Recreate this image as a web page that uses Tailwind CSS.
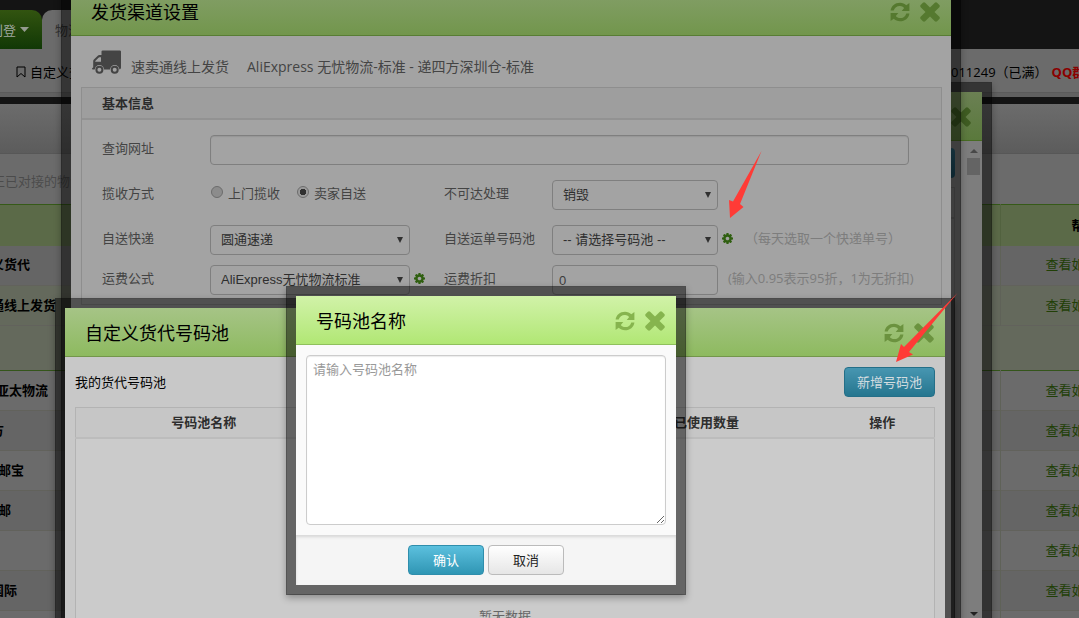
<!DOCTYPE html>
<html lang="zh-CN">
<head>
<meta charset="utf-8">
<title>发货渠道设置</title>
<script src="https://cdn.jsdelivr.net/npm/@tailwindcss/browser@4"></script>
</head>
<body class="relative h-screen overflow-hidden bg-[#6b6b6b] font-['Open_Sans','Noto_Sans_CJK_SC',sans-serif] text-[13px] leading-5 text-black">

<svg class="hidden" aria-hidden="true">
  <symbol id="times" viewBox="290 290 1212 1212"><path d="M1490 1322q0 40-28 68l-136 136q-28 28-68 28t-68-28l-294-294-294 294q-28 28-68 28t-68-28l-136-136q-28-28-28-68t28-68l294-294-294-294q-28-28-28-68t28-68l136-136q28-28 68-28t68 28l294 294 294-294q28-28 68-28t68 28l136 136q28 28 28 68t-28 68l-294 294 294 294q28 28 28 68z" transform="translate(0 -64)"/></symbol>
  <symbol id="refresh" viewBox="0 0 20 20"><path d="M.6 8.600C1.200 4 5 .8 10 .8c2.600 0 4.700.9 6.300 2.400L19.400 1v7.900h-7.700l2.500-2.800C13 4.700 11.700 3.900 10 3.900c-3.200 0-5.500 1.700-6.300 4.700zM19.400 11.400C18.800 16 15 19.200 10 19.200c-2.600 0-4.700-.9-6.300-2.400L.6 19v-7.900h7.700l-2.500 2.800c1.200 1.400 2.500 2.200 4.200 2.200 3.200 0 5.500-1.700 6.300-4.700z"/></symbol>
  <symbol id="cog" viewBox="128 128 1536 1536"><path d="M1152 896q0-106-75-181t-181-75-181 75-75 181 75 181 181 75 181-75 75-181zm512-109v222q0 12-8 23t-20 13l-185 28q-19 54-39 91 35 50 107 138 10 12 10 25t-9 23q-27 37-99 108t-94 71q-12 0-26-9l-138-108q-44 23-91 38-16 136-29 186-7 28-36 28h-222q-14 0-24.500-8.500t-11.500-21.500l-28-184q-49-16-90-37l-141 107q-10 9-25 9-14 0-25-11-126-114-165-168-7-10-7-23 0-12 8-23 15-21 51-66.500t54-70.500q-27-50-41-99l-183-27q-13-2-21-12.500t-8-23.500v-222q0-12 8-23t19-13l186-28q14-46 39-92-40-57-107-138-10-12-10-24 0-10 9-23 26-36 98.500-107.500t94.500-71.500q13 0 26 10l138 107q44-23 91-38 16-136 29-186 7-28 36-28h222q14 0 24.500 8.500t11.500 21.500l28 184q49 16 90 37l142-107q9-9 24-9 13 0 25 10 129 119 165 170 7 8 7 22 0 12-8 23-15 21-51 66.500t-54 70.500q26 50 41 98l183 28q13 2 21 12.500t8 23.500z"/></symbol>
  <symbol id="down" viewBox="0 0 6 6"><path d="M0 0h6L3 6z"/></symbol>
</svg>

<!-- Page behind the dialogs -->
<div class="flex h-full flex-col overflow-hidden">
  <nav class="flex h-[49px] shrink-0 items-end bg-[#141414]">
    <a href="#" class="flex h-[39px] w-[42px] items-center justify-end gap-1 overflow-hidden rounded-tr-[10px] bg-linear-to-b from-[#325410] to-[#103806] pr-[13px] whitespace-nowrap text-[#a0a8a0]"><span>刊登</span><svg class="h-[5px] w-[9px] shrink-0 fill-[#959b90]" viewBox="0 0 9 5"><path d="M0 0h9L4.500 5z"/></svg></a>
    <a href="#" class="flex h-[39px] w-[90px] items-center rounded-t-[10px] bg-[#6b6b6b] pl-[13px] text-[#303030]">物流</a>
  </nav>
  <div class="flex h-11 shrink-0 items-center border-b border-[#5b5b5b] bg-[#6b6b6b] pt-[2px]">
    <a href="#" class="flex flex-1 items-center gap-1 pl-4"><svg class="h-3 w-[10px] fill-none stroke-black" viewBox="0 0 10 12"><path d="M1 1h8v10L5 7.500 1 11z"/></svg>自定义查询</a>
    <div class="w-32 overflow-hidden whitespace-nowrap">011249（已满）<b class="ml-1 text-[#8a0000]">QQ群</b></div>
  </div>
  <div class="h-1 shrink-0 bg-[#616161]"></div>
  <div class="h-[7px] shrink-0 bg-[#141414]"></div>
  <div class="h-[50px] shrink-0 border-b border-[#575757] bg-linear-to-b from-[#6c6c6c] to-[#5c5c5c]"></div>
  <div class="flex h-[50px] shrink-0 items-center pt-1 text-[#4b4b4b]"><span class="flex w-[83px] justify-end overflow-hidden whitespace-nowrap">正已对接的物流</span></div>
  <table class="w-full shrink-0 table-fixed border-collapse">
    <colgroup><col><col class="w-[79px]"></colgroup>
    <thead><tr class="h-[41px] border-t border-[#365a18] bg-[#5b6a48]"><th></th><th class="overflow-hidden border-l border-[#52623f] pl-[71px] text-left font-bold whitespace-nowrap">帮助</th></tr></thead>
    <tbody class="[&_a]:text-[#213f06] [&_td]:overflow-hidden [&_td]:pb-[2px] [&_td]:whitespace-nowrap [&_td+td]:border-l [&_td+td]:border-[#5f6258] [&_td+td]:pl-[45px] [&_tr]:h-10 [&_tr]:border-b [&_tr]:border-[#62625c] [&_b]:flex [&_b]:justify-end">
      <tr class="bg-[#656565]"><td><b class="w-[30px]">义货代</b></td><td><a href="#">查看如何</a></td></tr>
      <tr class="bg-[#64695c]"><td><b class="w-14">速卖通线上发货</b></td><td><a href="#">查看如何</a></td></tr>
      <tr class="border-[#34551a]! bg-[#64695c]"><td colspan="2" class="h-[45px]"></td></tr>
      <tr><td><b class="w-12">亚太物流</b></td><td><a href="#">查看如何</a></td></tr>
      <tr class="bg-[#656565]"><td><b class="w-1">方</b></td><td><a href="#">查看如何</a></td></tr>
      <tr><td><b class="w-6">邮宝</b></td><td><a href="#">查看如何</a></td></tr>
      <tr class="bg-[#656565]"><td><b class="w-[11px]">邮</b></td><td><a href="#">查看如何</a></td></tr>
      <tr><td></td><td><a href="#">查看如何</a></td></tr>
      <tr class="bg-[#656565]"><td><b class="w-[17px]">国际</b></td><td><a href="#">查看如何</a></td></tr>
      <tr><td></td><td></td></tr>
    </tbody>
  </table>
</div>

<!-- Dialog: channel list -->
<section class="absolute top-[82px] left-[92px] flex h-[640px] w-[900px] flex-col border-10 border-black/50 bg-[#7e7e7e] bg-clip-padding shadow-[0_3px_7px_rgba(0,0,0,0.3)]">
  <header class="flex h-[49px] shrink-0 items-center justify-end border-b border-[#486c23] bg-linear-to-b from-[#6b8053] to-[#5a793c] pt-[2px] pr-[11px]">
    <button aria-label="关闭"><svg class="size-5 fill-[#3f5c22]"><use href="#times"/></svg></button>
  </header>
  <div class="flex flex-1">
    <div class="flex-1 pt-[7px] pr-[10px]">
      <button class="ml-auto block h-[30px] w-24 rounded-[4px] bg-linear-to-b from-[#2b6074] to-[#1a4c5f]" aria-label="添加"></button>
      <div class="mt-[9px] h-8 border border-b-2 border-[#6f6f6f]"></div>
      <div class="h-[500px] border-r border-[#6f6f6f]"></div>
    </div>
    <div class="flex w-[17px] flex-col items-center bg-[#7d7d7d] pt-2">
      <svg class="h-1 w-2 fill-[#484848]" viewBox="0 0 8 4"><path d="M0 4h8L4 0z"/></svg>
      <div class="mt-[5px] h-[17px] w-[13px] bg-[#646464]"></div>
      <svg class="mt-[437px] h-1 w-2 fill-[#222]" viewBox="0 0 8 4"><path d="M0 0h8L4 4z"/></svg>
    </div>
  </div>
</section>

<!-- Dialog: shipping channel settings -->
<section class="absolute -top-[23px] left-[61px] h-[760px] w-[900px] border-10 border-black/50 bg-[#a3a3a3] bg-clip-padding shadow-[0_3px_7px_rgba(0,0,0,0.3)]">
  <header class="flex h-[49px] items-center border-b border-[#587d34] bg-linear-to-b from-[#859f6a] to-[#72964c] pt-[2px] pr-[11px] pl-5">
    <h2 class="flex-1 text-lg">发货渠道设置</h2>
    <button aria-label="刷新"><svg class="mr-[10px] size-5 fill-[#55792f]"><use href="#refresh"/></svg></button>
    <button aria-label="关闭"><svg class="size-5 fill-[#55792f]"><use href="#times"/></svg></button>
  </header>
  <div class="pr-[9px] pl-[10px] text-[#444]">
    <div class="flex h-[51px] items-center pt-[10px] pl-[11px] text-sm">
      <svg class="mr-[10px] mb-[9px] h-6 w-[29px] fill-[#444]" viewBox="0 0 29 24"><path fill-rule="evenodd" d="M9.500 1.600Q9.500.4 10.700.4h17Q29 .4 29 1.600v16.200q0 1.700-2 1.700H.9Q0 19.500 0 18.800t1.200-1.200V11q0-.9.7-1.600l3.600-3.500Q6.300 5 7.500 5h2zM3.200 11.800H9V7.300H7.400q-.5 0-.9.4l-3 3q-.3.3-.3 1.100z"/><circle cx="7.400" cy="19.700" r="4.700" fill="#a3a3a3"/><circle cx="22.700" cy="19.700" r="4.700" fill="#a3a3a3"/><circle cx="7.400" cy="19.700" r="3" fill="none" stroke="#444" stroke-width="2"/><circle cx="22.700" cy="19.700" r="3" fill="none" stroke="#444" stroke-width="2"/></svg>
      <span>速卖通线上发货</span><span class="ml-[18px]">AliExpress 无忧物流-标准 - 递四方深圳仓-标准</span>
    </div>
    <div class="border border-[#8e8e8e]">
      <h3 class="h-8 border-b-2 border-[#929292] bg-[#9e9e9e] pl-5 leading-[30px] font-bold text-[#2b2b2b]">基本信息</h3>
      <form class="flex flex-col pt-[15px] pr-8 pb-[9px] pl-5 leading-[26px]">
        <div class="flex h-[45px] items-start"><label for="url" class="w-[108px]">查询网址</label>
          <input id="url" class="h-[30px] flex-1 rounded-[4px] border border-[#7f7f7f] shadow-[inset_0_1px_1px_rgba(0,0,0,0.08)]"></div>
        <div class="grid h-[45px] grid-cols-[108px_234px_108px_1fr] items-start">
          <span>揽收方式</span>
          <div class="flex pl-px">
            <label class="flex items-center gap-[5px]"><input type="radio" name="m" class="mb-[2px] size-3 appearance-none rounded-full border border-[#6c6c6c] bg-[#8c8c8c]">上门揽收</label>
            <label class="ml-[17px] flex items-center gap-[5px]"><input type="radio" name="m" checked class="mb-[2px] size-3 appearance-none rounded-full border border-[#6c6c6c] bg-[radial-gradient(circle,#303030_0_3px,#9a9a9a_3px)]">卖家自送</label>
          </div>
          <label for="undel">不可达处理</label>
          <div class="relative w-[166px]"><select id="undel" class="h-[30px] w-full appearance-none rounded-[4px] border border-[#7f7f7f] bg-transparent pl-[10px] font-['Liberation_Sans','Noto_Sans_CJK_SC',sans-serif] text-[#2e2e2e]"><option>销毁</option></select><svg class="pointer-events-none absolute top-3 right-[7px] size-[6px] fill-[#303030]"><use href="#down"/></svg></div>
        </div>
        <div class="grid h-10 grid-cols-[108px_234px_108px_1fr] items-start">
          <label for="exp">自送快递</label>
          <div class="relative w-[200px]"><select id="exp" class="h-[30px] w-full appearance-none rounded-[4px] border border-[#7f7f7f] bg-transparent pl-[10px] font-['Liberation_Sans','Noto_Sans_CJK_SC',sans-serif] text-[#2e2e2e]"><option>圆通速递</option></select><svg class="pointer-events-none absolute top-3 right-[7px] size-[6px] fill-[#303030]"><use href="#down"/></svg></div>
          <label for="pool">自送运单号码池</label>
          <div class="flex">
            <div class="relative w-[166px]"><select id="pool" class="h-[30px] w-full appearance-none rounded-[4px] border border-[#7f7f7f] bg-transparent pl-[10px] font-['Liberation_Sans','Noto_Sans_CJK_SC',sans-serif] text-[#2e2e2e]"><option>-- 请选择号码池 --</option></select><svg class="pointer-events-none absolute top-3 right-[7px] size-[6px] fill-[#303030]"><use href="#down"/></svg></div>
            <button type="button" aria-label="设置号码池" class="ml-1 h-[27px]"><svg class="size-[11px] fill-[#2f5f10]"><use href="#cog"/></svg></button>
            <span class="ml-[12px] whitespace-nowrap text-[#7d7d7d]">（每天选取一个快递单号）</span>
          </div>
        </div>
        <div class="grid h-[30px] grid-cols-[108px_234px_108px_1fr] items-start">
          <label for="fee">运费公式</label>
          <div class="flex">
            <div class="relative w-[200px]"><select id="fee" class="h-[30px] w-full appearance-none rounded-[4px] border border-[#7f7f7f] bg-transparent pl-[10px] font-['Liberation_Sans','Noto_Sans_CJK_SC',sans-serif] text-[#2e2e2e]"><option>AliExpress无忧物流标准</option></select><svg class="pointer-events-none absolute top-3 right-[7px] size-[6px] fill-[#303030]"><use href="#down"/></svg></div>
            <button type="button" aria-label="设置公式" class="ml-1 h-[27px]"><svg class="size-[11px] fill-[#2f5f10]"><use href="#cog"/></svg></button>
          </div>
          <label for="disc">运费折扣</label>
          <div class="flex">
            <input id="disc" value="0" class="h-[30px] w-[166px] rounded-[4px] border border-[#7f7f7f] px-[6px] font-['Liberation_Sans',sans-serif] text-[#3c3c3c]">
            <span class="ml-[10px] whitespace-nowrap text-[#7d7d7d]">(输入0.95表示95折，1为无折扣)</span>
          </div>
        </div>
      </form>
    </div>
  </div>
</section>

<!-- Dialog: custom number pools -->
<section class="absolute top-[298px] left-[55px] h-[420px] w-[900px] border-10 border-black/50 bg-[#c8c8c8] bg-clip-padding shadow-[0_3px_7px_rgba(0,0,0,0.3)]">
  <header class="flex h-[49px] items-center border-b border-[#73964b] bg-linear-to-b from-[#a6c486] to-[#8eba5f] pt-[2px] pr-[11px] pl-5">
    <h2 class="flex-1 text-lg">自定义货代号码池</h2>
    <button aria-label="刷新"><svg class="mr-[10px] size-5 fill-[#6b923f]"><use href="#refresh"/></svg></button>
    <button aria-label="关闭"><svg class="size-5 fill-[#6b923f]"><use href="#times"/></svg></button>
  </header>
  <div class="p-[10px]">
    <div class="flex items-center justify-between">
      <span>我的货代号码池</span>
      <button class="h-[30px] rounded-[4px] border border-[#246f88] bg-linear-to-b from-[#4796b1] to-[#25768f] px-[12px] text-[#d4dde0]">新增号码池</button>
    </div>
    <table class="mt-[10px] w-full table-fixed border-collapse border border-[#b3b3b3] bg-[#cbcbcb]">
      <colgroup><col class="w-[256px]"><col><col class="w-[248px]"><col class="w-[104px]"></colgroup>
      <thead><tr class="h-[30px] border-b-2 border-[#bcbcbc] bg-[#c6c6c6] text-[#2e2e2e]"><th>号码池名称</th><th></th><th>已使用数量</th><th>操作</th></tr></thead>
      <tbody><tr><td colspan="4" class="h-[240px] pt-[116px] text-center text-[#666]">暂无数据</td></tr></tbody>
    </table>
  </div>
</section>

<!-- Dialog: pool name -->
<section class="absolute top-[286px] left-[286px] w-[400px] border-10 border-black/50 bg-[#fafafa] bg-clip-padding shadow-[0_3px_7px_rgba(0,0,0,0.3)]">
  <header class="flex h-[49px] items-center border-b border-[#8fc05c] bg-linear-to-b from-[#d1f2a8] to-[#b1e774] pt-[2px] pr-[11px] pl-5">
    <h2 class="flex-1 text-lg"><label for="name">号码池名称</label></h2>
    <button aria-label="刷新"><svg class="mr-[10px] size-5 fill-[#86b44e]"><use href="#refresh"/></svg></button>
    <button aria-label="关闭"><svg class="size-5 fill-[#86b44e]"><use href="#times"/></svg></button>
  </header>
  <div class="p-[10px]">
    <textarea id="name" placeholder="请输入号码池名称" class="block h-[170px] w-full rounded-[4px] border border-[#ccc] bg-white px-[6px] py-[3px] shadow-[inset_0_1px_1px_rgba(0,0,0,0.08)] placeholder:text-[#999]"></textarea>
  </div>
  <footer class="flex h-[50px] items-center justify-center gap-1 bg-[#f5f5f5] shadow-[inset_0_2px_3px_rgba(0,0,0,0.12)]">
    <button class="h-[30px] w-[76px] rounded-[4px] border border-[#2f8eac] bg-linear-to-b from-[#5bc0de] to-[#2f96b4] text-white">确认</button>
    <button class="h-[30px] w-[76px] rounded-[4px] border border-[#bbb] bg-linear-to-b from-white to-[#e6e6e6] text-[#222]">取消</button>
  </footer>
</section>

<!-- Annotation arrows -->
<svg class="pointer-events-none absolute top-[151px] left-[728px] h-[68px] w-[34px] fill-[#ff3b36]" viewBox="0 0 34 68"><path d="M2 67L1 49l4 1.500L33.500 0 12 53l3.500 3z"/></svg>
<svg class="pointer-events-none absolute top-[292px] left-[895px] h-[71px] w-16 fill-[#ff3b36]" viewBox="0 0 64 71"><path d="M1 70l5-18 3 3L62.500 1 14 60l4 2.500z"/></svg>
</body>
</html>
